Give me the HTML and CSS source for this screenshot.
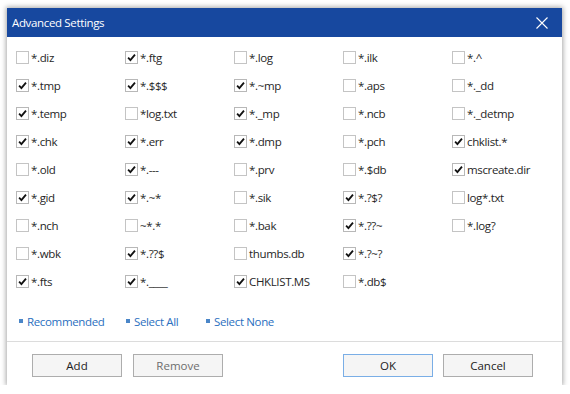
FILE: index.html
```html
<!DOCTYPE html>
<html>
<head>
<meta charset="utf-8">
<link rel="stylesheet" href="styles.css">
</head>
<body>
<div class="dialog">
  <div class="titlebar">
    <span class="title">Advanced Settings</span>
    <svg class="close" width="12" height="12" viewBox="0 0 12 12"><path d="M0.5 0.5 L11.5 11.5 M11.5 0.5 L0.5 11.5" stroke="#fff" stroke-width="1.1" fill="none"/></svg>
  </div>
  <div class="content">
    <div class="grid">
      <label class="item"><span class="box"></span>*.diz</label>
      <label class="item"><span class="box on"><svg viewBox="0 0 12 12"><path d="M2.3 6.2 L4.8 8.8 L9.8 2.8"/></svg></span>*.ftg</label>
      <label class="item"><span class="box"></span>*.log</label>
      <label class="item"><span class="box"></span>*.ilk</label>
      <label class="item"><span class="box"></span>*.^</label>

      <label class="item"><span class="box on"><svg viewBox="0 0 12 12"><path d="M2.3 6.2 L4.8 8.8 L9.8 2.8"/></svg></span>*.tmp</label>
      <label class="item"><span class="box on"><svg viewBox="0 0 12 12"><path d="M2.3 6.2 L4.8 8.8 L9.8 2.8"/></svg></span>*.$$$</label>
      <label class="item"><span class="box on"><svg viewBox="0 0 12 12"><path d="M2.3 6.2 L4.8 8.8 L9.8 2.8"/></svg></span>*.~mp</label>
      <label class="item"><span class="box"></span>*.aps</label>
      <label class="item"><span class="box"></span>*._dd</label>

      <label class="item"><span class="box on"><svg viewBox="0 0 12 12"><path d="M2.3 6.2 L4.8 8.8 L9.8 2.8"/></svg></span>*.temp</label>
      <label class="item"><span class="box"></span>*log.txt</label>
      <label class="item"><span class="box on"><svg viewBox="0 0 12 12"><path d="M2.3 6.2 L4.8 8.8 L9.8 2.8"/></svg></span>*._mp</label>
      <label class="item"><span class="box"></span>*.ncb</label>
      <label class="item"><span class="box"></span>*._detmp</label>

      <label class="item"><span class="box on"><svg viewBox="0 0 12 12"><path d="M2.3 6.2 L4.8 8.8 L9.8 2.8"/></svg></span>*.chk</label>
      <label class="item"><span class="box on"><svg viewBox="0 0 12 12"><path d="M2.3 6.2 L4.8 8.8 L9.8 2.8"/></svg></span>*.err</label>
      <label class="item"><span class="box on"><svg viewBox="0 0 12 12"><path d="M2.3 6.2 L4.8 8.8 L9.8 2.8"/></svg></span>*.dmp</label>
      <label class="item"><span class="box"></span>*.pch</label>
      <label class="item"><span class="box on"><svg viewBox="0 0 12 12"><path d="M2.3 6.2 L4.8 8.8 L9.8 2.8"/></svg></span>chklist.*</label>

      <label class="item"><span class="box"></span>*.old</label>
      <label class="item"><span class="box on"><svg viewBox="0 0 12 12"><path d="M2.3 6.2 L4.8 8.8 L9.8 2.8"/></svg></span>*.---</label>
      <label class="item"><span class="box"></span>*.prv</label>
      <label class="item"><span class="box"></span>*.$db</label>
      <label class="item"><span class="box on"><svg viewBox="0 0 12 12"><path d="M2.3 6.2 L4.8 8.8 L9.8 2.8"/></svg></span>mscreate.dir</label>

      <label class="item"><span class="box on"><svg viewBox="0 0 12 12"><path d="M2.3 6.2 L4.8 8.8 L9.8 2.8"/></svg></span>*.gid</label>
      <label class="item"><span class="box on"><svg viewBox="0 0 12 12"><path d="M2.3 6.2 L4.8 8.8 L9.8 2.8"/></svg></span>*.~*</label>
      <label class="item"><span class="box"></span>*.sik</label>
      <label class="item"><span class="box on"><svg viewBox="0 0 12 12"><path d="M2.3 6.2 L4.8 8.8 L9.8 2.8"/></svg></span>*.?$?</label>
      <label class="item"><span class="box"></span>log*.txt</label>

      <label class="item"><span class="box"></span>*.nch</label>
      <label class="item"><span class="box"></span>~*.*</label>
      <label class="item"><span class="box"></span>*.bak</label>
      <label class="item"><span class="box on"><svg viewBox="0 0 12 12"><path d="M2.3 6.2 L4.8 8.8 L9.8 2.8"/></svg></span>*.??~</label>
      <label class="item"><span class="box"></span>*.log?</label>

      <label class="item"><span class="box"></span>*.wbk</label>
      <label class="item"><span class="box on"><svg viewBox="0 0 12 12"><path d="M2.3 6.2 L4.8 8.8 L9.8 2.8"/></svg></span>*.??$</label>
      <label class="item"><span class="box"></span>thumbs.db</label>
      <label class="item"><span class="box on"><svg viewBox="0 0 12 12"><path d="M2.3 6.2 L4.8 8.8 L9.8 2.8"/></svg></span>*.?~?</label>
      <span class="item"></span>

      <label class="item"><span class="box on"><svg viewBox="0 0 12 12"><path d="M2.3 6.2 L4.8 8.8 L9.8 2.8"/></svg></span>*.fts</label>
      <label class="item"><span class="box on"><svg viewBox="0 0 12 12"><path d="M2.3 6.2 L4.8 8.8 L9.8 2.8"/></svg></span>*.____</label>
      <label class="item"><span class="box on"><svg viewBox="0 0 12 12"><path d="M2.3 6.2 L4.8 8.8 L9.8 2.8"/></svg></span>CHKLIST.MS</label>
      <label class="item"><span class="box"></span>*.db$</label>
      <span class="item"></span>
    </div>
    <div class="links">
      <a class="link link-rec">Recommended</a>
      <a class="link link-all">Select All</a>
      <a class="link">Select None</a>
    </div>
  </div>
  <div class="footer">
    <div class="group">
      <button class="btn">Add</button>
      <button class="btn disabled">Remove</button>
    </div>
    <div class="group group-right">
      <button class="btn primary">OK</button>
      <button class="btn">Cancel</button>
    </div>
  </div>
</div>
</body>
</html>
```

FILE: styles.css
```css
html, body {
  margin: 0;
  padding: 0;
  background: #ffffff;
}
body {
  font-family: "Open Sans", "Noto Sans", "Liberation Sans", sans-serif;
  font-size: 11.5px;
  color: #222;
}
.dialog {
  margin: 8px 0 0 7px;
  width: 555px;
  height: 377px;
  background: #fff;
  box-shadow: 0 0 5px 1px rgba(0, 0, 0, 0.35);
  display: flex;
  flex-direction: column;
}
.titlebar {
  height: 29px;
  background: #17489f;
  display: flex;
  align-items: center;
  justify-content: space-between;
  padding: 0 14px 0 5px;
  color: #fff;
}
.title {
  font-size: 11.5px;
  letter-spacing: -0.35px;
}
.close {
  display: block;
}
.content {
  padding: 6px 0 0 9px;
  flex: 1;
}
.grid {
  display: grid;
  grid-template-columns: repeat(5, 109px);
  grid-auto-rows: 28px;
}
.item {
  display: flex;
  align-items: center;
  white-space: nowrap;
  color: #262626;
  letter-spacing: -0.35px;
}
.box {
  width: 11px;
  height: 11px;
  border: 1px solid #c4c4c4;
  background: #fff;
  margin-right: 2px;
  flex: none;
  display: flex;
  align-items: center;
  justify-content: center;
}
.box.on {
  border-color: #b8b8b8;
}
.box svg {
  width: 11px;
  height: 11px;
  display: block;
}
.box svg path {
  fill: none;
  stroke: #111;
  stroke-width: 2;
}
.links {
  display: flex;
  margin-top: 18px;
  height: 16px;
  align-items: center;
}
.link {
  color: #2a6fc0;
  display: flex;
  align-items: center;
  letter-spacing: -0.35px;
}
.link::before {
  content: "";
  width: 4px;
  height: 4px;
  background: #4a86c8;
  margin: 0 4px 0 3px;
}
.link-rec {
  width: 107px;
}
.link-all {
  width: 80px;
}
.footer {
  height: 44px;
  border-top: 1px solid #dcdcdc;
  display: flex;
  justify-content: space-between;
  padding: 12px 29px 0 25px;
  box-sizing: border-box;
}
.group {
  display: flex;
  gap: 11px;
}
.group-right {
  gap: 10px;
}
.btn {
  width: 90px;
  height: 23px;
  background: #f5f5f5;
  border: 1px solid #adadad;
  font-family: inherit;
  font-size: 11.5px;
  color: #222;
  padding: 0;
  border-radius: 0;
}
.btn.disabled {
  color: #6d6d6d;
}
.btn.primary {
  border-color: #7aaee6;
}
```
